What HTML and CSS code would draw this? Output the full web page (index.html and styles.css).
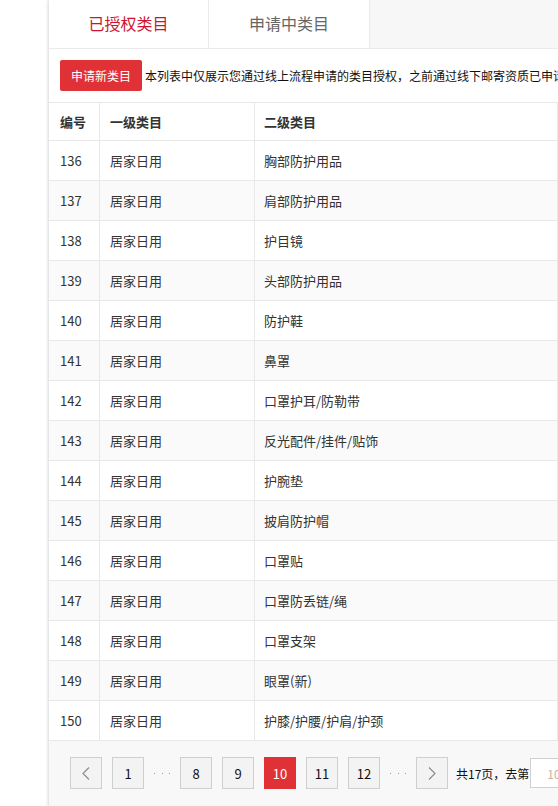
FILE: index.html
```html
<!DOCTYPE html>
<html lang="zh-CN">
<head>
<meta charset="utf-8">
<title>类目管理</title>
<link rel="stylesheet" href="styles.css">
</head>
<body>
<div class="page">
  <div class="tabs">
    <div class="tab tab-active">已授权类目</div>
    <div class="tab tab-wide">申请中类目</div>
    <div class="tab-fill"></div>
  </div>
  <div class="panel">
    <div class="toolbar">
      <button class="btn-apply">申请新类目</button>
      <span class="notice">本列表中仅展示您通过线上流程申请的类目授权，之前通过线下邮寄资质已申请的类目授权请联系客服查询</span>
    </div>
    <div class="table">
      <div class="row head"><div class="cell c1">编号</div><div class="cell c2">一级类目</div><div class="cell c3">二级类目</div></div>
      <div class="row"><div class="cell c1">136</div><div class="cell c2">居家日用</div><div class="cell c3">胸部防护用品</div></div>
      <div class="row alt"><div class="cell c1">137</div><div class="cell c2">居家日用</div><div class="cell c3">肩部防护用品</div></div>
      <div class="row"><div class="cell c1">138</div><div class="cell c2">居家日用</div><div class="cell c3">护目镜</div></div>
      <div class="row alt"><div class="cell c1">139</div><div class="cell c2">居家日用</div><div class="cell c3">头部防护用品</div></div>
      <div class="row"><div class="cell c1">140</div><div class="cell c2">居家日用</div><div class="cell c3">防护鞋</div></div>
      <div class="row alt"><div class="cell c1">141</div><div class="cell c2">居家日用</div><div class="cell c3">鼻罩</div></div>
      <div class="row"><div class="cell c1">142</div><div class="cell c2">居家日用</div><div class="cell c3">口罩护耳/防勒带</div></div>
      <div class="row alt"><div class="cell c1">143</div><div class="cell c2">居家日用</div><div class="cell c3">反光配件/挂件/贴饰</div></div>
      <div class="row"><div class="cell c1">144</div><div class="cell c2">居家日用</div><div class="cell c3">护腕垫</div></div>
      <div class="row alt"><div class="cell c1">145</div><div class="cell c2">居家日用</div><div class="cell c3">披肩防护帽</div></div>
      <div class="row"><div class="cell c1">146</div><div class="cell c2">居家日用</div><div class="cell c3">口罩贴</div></div>
      <div class="row alt"><div class="cell c1">147</div><div class="cell c2">居家日用</div><div class="cell c3">口罩防丢链/绳</div></div>
      <div class="row"><div class="cell c1">148</div><div class="cell c2">居家日用</div><div class="cell c3">口罩支架</div></div>
      <div class="row alt"><div class="cell c1">149</div><div class="cell c2">居家日用</div><div class="cell c3">眼罩(新)</div></div>
      <div class="row"><div class="cell c1">150</div><div class="cell c2">居家日用</div><div class="cell c3">护膝/护腰/护肩/护颈</div></div>
    </div>
    <div class="pager">
      <span class="pg"><svg width="8" height="13" viewBox="0 0 8 13"><path d="M7 0.5 L1 6.5 L7 12.5" fill="none" stroke="#8a8a8a" stroke-width="1.1"/></svg></span>
      <span class="pg">1</span>
      <span class="dots"><i></i><i></i><i></i></span>
      <span class="pg">8</span>
      <span class="pg">9</span>
      <span class="pg pg-cur">10</span>
      <span class="pg">11</span>
      <span class="pg">12</span>
      <span class="dots"><i></i><i></i><i></i></span>
      <span class="pg pg-next"><svg width="8" height="13" viewBox="0 0 8 13"><path d="M1 0.5 L7 6.5 L1 12.5" fill="none" stroke="#8a8a8a" stroke-width="1.1"/></svg></span>
      <span class="pg-total">共17页，去第</span>
      <span class="pg-input">10</span>
    </div>
  </div>
</div>
</body>
</html>
```
FILE: styles.css
```css
html, body {
  margin: 0;
  padding: 0;
  background: #fff;
  overflow: hidden;
}
body {
  font-family: "Noto Sans CJK SC", "Noto Sans", sans-serif;
  color: #333;
  font-size: 13px;
}
.page {
  margin-left: 49px;
  width: 700px;
  min-height: 806px;
  background: #fff;
  box-shadow: -1px 0 3px rgba(0, 0, 0, 0.16);
}
.tabs {
  display: flex;
  height: 48px;
  width: 509px;
}
.tab {
  width: 160px;
  box-sizing: border-box;
  border-right: 1px solid #ebebeb;
  background: #fff;
  display: flex;
  align-items: center;
  justify-content: center;
  font-size: 16px;
  color: #666;
  padding-bottom: 2px;
}
.tab-wide {
  width: 161px;
}
.tab-active {
  color: #cc1431;
}
.tab-fill {
  flex: 1;
  background: #f7f7f7;
}
.panel {
  border-top: 1px solid #ebebeb;
  width: 509px;
}
.toolbar {
  display: flex;
  align-items: center;
  height: 53px;
  padding-left: 11px;
  white-space: nowrap;
  overflow: visible;
}
.btn-apply {
  height: 31px;
  width: 82px;
  padding: 0;
  border: none;
  border-radius: 2px;
  background: #e03236;
  color: #fff;
  font-family: inherit;
  font-size: 12px;
  flex: none;
}
.notice {
  margin-left: 3px;
  font-size: 12px;
  color: #111;
}
.table {
  border-top: 1px solid #e8e8e8;
}
.row {
  display: grid;
  grid-template-columns: 51px 155px 303px;
  height: 40px;
  box-sizing: border-box;
  border-bottom: 1px solid #e8e8e8;
  background: #fff;
}
.row.alt {
  background: #fafafa;
}
.row.head {
  height: 38px;
  font-weight: bold;
}
.cell {
  display: flex;
  align-items: center;
  box-sizing: border-box;
  border-right: 1px solid #e8e8e8;
  padding-left: 10px;
  white-space: nowrap;
}
.c1 {
  padding-left: 11px;
}
.c3 {
  padding-left: 9px;
}
.pager {
  display: flex;
  align-items: center;
  background: #f8f8f8;
  height: 66px;
  padding-left: 21px;
  padding-bottom: 2px;
  box-sizing: border-box;
  white-space: nowrap;
  font-size: 12px;
  color: #111;
}
.pg {
  width: 32px;
  height: 32px;
  box-sizing: border-box;
  border: 1px solid #cfcfcf;
  background: #f3f3f3;
  display: flex;
  align-items: center;
  justify-content: center;
  margin-right: 10px;
  font-size: 13px;
  flex: none;
}
.pg-cur {
  background: #e03236;
  border-color: #e03236;
  color: #fff;
}
.dots {
  width: 16px;
  margin-right: 10px;
  display: flex;
  justify-content: space-between;
  align-items: center;
  flex: none;
}
.dots i {
  width: 1px;
  height: 1px;
  background: #999;
}
.pg-next {
  margin-right: 8px;
}
.pg-total {
  margin-right: 1px;
  font-size: 12px;
}
.pg-input {
  width: 50px;
  height: 30px;
  box-sizing: border-box;
  border: 1px solid #d0d0d0;
  background: #fff;
  color: #c2b7a6;
  display: flex;
  align-items: center;
  padding-left: 16px;
  font-size: 12px;
  flex: none;
}
```
